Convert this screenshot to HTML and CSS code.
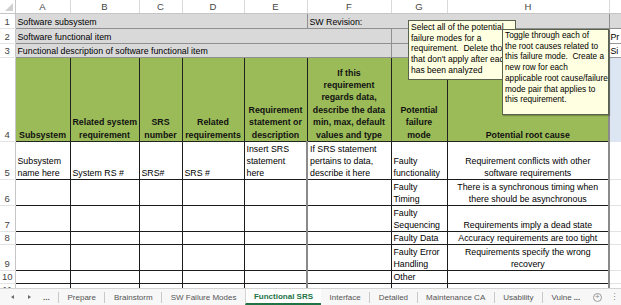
FILE: index.html
```html
<!DOCTYPE html>
<html lang="en">
<head>
    <meta charset="UTF-8">
    <title>Functional SRS</title>
    <link rel="stylesheet" href="styles.css">
</head>
<body>

	<div class="sheet">
		<table class="grid">
			<colgroup>
				<col class="w_rh"><col class="w_a"><col class="w_b"><col class="w_c"><col class="w_d">
				<col class="w_e"><col class="w_f"><col class="w_g"><col class="w_h"><col class="w_i">
			</colgroup>
			<tr class="r_ch">
				<th class="corner"></th>
				<th class="colhead">A</th>
				<th class="colhead">B</th>
				<th class="colhead">C</th>
				<th class="colhead">D</th>
				<th class="colhead">E</th>
				<th class="colhead">F</th>
				<th class="colhead">G</th>
				<th class="colhead">H</th>
				<th class="colhead"></th>
			</tr>
			<tr class="r_1">
				<td class="rh">1</td>
				<td class="band" colspan="5">Software subsystem</td>
				<td class="band rev" colspan="3">SW Revision:</td>
				<td class="band"></td>
			</tr>
			<tr class="r_2">
				<td class="rh">2</td>
				<td class="band" colspan="6">Software functional item</td>
				<td class="band" colspan="2"></td>
				<td class="side">Pr</td>
			</tr>
			<tr class="r_3">
				<td class="rh">3</td>
				<td class="band" colspan="6">Functional description of software functional item</td>
				<td class="band" colspan="2"></td>
				<td class="side">Si</td>
			</tr>
			<tr class="r_4">
				<td class="rh">4</td>
				<td class="head">Subsystem</td>
				<td class="head">Related system<br>requirement</td>
				<td class="head">SRS<br>number</td>
				<td class="head">Related<br>requirements</td>
				<td class="head">Requirement<br>statement or<br>description</td>
				<td class="head">If this<br>requirement<br>regards data,<br>describe the data<br>min, max, default<br>values and type</td>
				<td class="head">Potential<br>failure<br>mode</td>
				<td class="head">Potential root cause</td>
				<td class="blue"></td>
			</tr>
			<tr class="r_5">
				<td class="rh">5</td>
				<td class="d">Subsystem<br>name here</td>
				<td class="d">System RS #</td>
				<td class="d">SRS#</td>
				<td class="d">SRS #</td>
				<td class="d">Insert SRS<br>statement<br>here</td>
				<td class="d f">If SRS statement<br>pertains to data,<br>describe it here</td>
				<td class="d">Faulty<br>functionality</td>
				<td class="d h">Requirement conflicts with other<br>software requirements</td>
				<td class="out"></td>
			</tr>
			<tr class="r_6">
				<td class="rh">6</td>
				<td class="d"></td><td class="d"></td><td class="d"></td><td class="d"></td><td class="d"></td>
				<td class="d f"></td>
				<td class="d">Faulty<br>Timing</td>
				<td class="d h">There is a synchronous timing when<br>there should be asynchronous</td>
				<td class="out"></td>
			</tr>
			<tr class="r_7">
				<td class="rh">7</td>
				<td class="d"></td><td class="d"></td><td class="d"></td><td class="d"></td><td class="d"></td>
				<td class="d f"></td>
				<td class="d">Faulty<br>Sequencing</td>
				<td class="d h">Requirements imply a dead state</td>
				<td class="out"></td>
			</tr>
			<tr class="r_8">
				<td class="rh">8</td>
				<td class="d"></td><td class="d"></td><td class="d"></td><td class="d"></td><td class="d"></td>
				<td class="d f"></td>
				<td class="d">Faulty Data</td>
				<td class="d h">Accuracy requirements are too tight</td>
				<td class="out"></td>
			</tr>
			<tr class="r_9">
				<td class="rh">9</td>
				<td class="d"></td><td class="d"></td><td class="d"></td><td class="d"></td><td class="d"></td>
				<td class="d f"></td>
				<td class="d">Faulty Error<br>Handling</td>
				<td class="d h">Requirements specify the wrong<br>recovery</td>
				<td class="out"></td>
			</tr>
			<tr class="r_10">
				<td class="rh">10</td>
				<td class="d"></td><td class="d"></td><td class="d"></td><td class="d"></td><td class="d"></td>
				<td class="d f"></td>
				<td class="d">Other</td>
				<td class="d h"></td>
				<td class="out"></td>
			</tr>
			<tr class="r_11">
				<td class="rh">11</td>
				<td class="d"></td><td class="d"></td><td class="d"></td><td class="d"></td><td class="d"></td>
				<td class="d f"></td>
				<td class="d"></td>
				<td class="d h"></td>
				<td class="out"></td>
			</tr>
		</table>

		<div class="note note_modes">Select all of the potential<br>failure modes for a<br>requirement.&nbsp; Delete those<br>that don't apply after each<br>has been analyzed</div>
		<div class="note note_causes">Toggle through each of<br>the root causes related to<br>this failure mode.&nbsp; Create a<br>new row for each<br>applicable root cause/failure<br>mode pair that applies to<br>this requirement.</div>
	</div>

	<div class="tabbar">
		<div class="nav">
			<span class="arrow left"></span>
			<span class="arrow right"></span>
			<span class="dots">...</span>
		</div>
		<span class="tab">Prepare</span>
		<span class="tab">Brainstorm</span>
		<span class="tab">SW Failure Modes</span>
		<span class="tab active">Functional SRS</span>
		<span class="tab first">Interface</span>
		<span class="tab">Detailed</span>
		<span class="tab">Maintenance CA</span>
		<span class="tab">Usability</span>
		<span class="tab">Vulne <b class="more">...</b></span>
		<span class="add">+</span>
		<span class="menu">&#8942;</span>
	</div>

</body>
</html>
```

FILE: styles.css
```css
	*{
		margin: 0;
		padding: 0;
		box-sizing: border-box;
	}
    body {
        font-family: "Liberation Sans", Arial, sans-serif;
        width: 621px;
        height: 305px;
        overflow: hidden;
        background-color: #fff;
        color: #000;
    }
    .sheet {
    	position: relative;
    	height: 288px;
    	overflow: hidden;
    }
    .grid {
    	border-collapse: collapse;
    	table-layout: fixed;
    	width: 621px;
    }
    .w_rh { width: 15px; }
    .w_a { width: 55px; }
    .w_b { width: 69px; }
    .w_c { width: 43px; }
    .w_d { width: 62px; }
    .w_e { width: 63px; }
    .w_f { width: 84px; }
    .w_g { width: 56px; }
    .w_h { width: 162px; }
    .w_i { width: 12px; }

    .grid td,
    .grid th {
    	padding: 0 2px;
    	font-size: 8.8px;
    	line-height: 12px;
    	font-weight: normal;
    	text-align: left;
    	vertical-align: bottom;
    	white-space: nowrap;
    	overflow: hidden;
    }

    .r_ch { height: 13px; }
    .r_1 { height: 15px; }
    .r_2 { height: 15px; }
    .r_3 { height: 14px; }
    .r_4 { height: 84px; }
    .r_5 { height: 38px; }
    .r_6 { height: 26px; }
    .r_7 { height: 26px; }
    .r_8 { height: 12px; }
    .r_9 { height: 26px; }
    .r_10 { height: 13px; }
    .r_11 { height: 13px; }

    .grid .corner {
    	position: relative;
    	border-right: 1px solid #c6c6c6;
    	border-bottom: 1px solid #c6c6c6;
    }
    .corner::after {
    	content: "";
    	position: absolute;
    	right: 2px;
    	bottom: 2px;
    	border-left: 8px solid transparent;
    	border-bottom: 8px solid #d0d0d0;
    }
    .grid .colhead {
    	text-align: center;
    	vertical-align: middle;
    	font-size: 9.5px;
    	line-height: 13px;
    	color: #444;
    	border-right: 1px solid #d9d9d9;
    	border-bottom: 1px solid #c6c6c6;
    }
    .grid .rh {
    	padding: 0;
    	text-align: center;
    	font-size: 9.5px;
    	color: #444;
    	border-right: 1px solid #c6c6c6;
    	border-bottom: 1px solid #e3e3e3;
    }
    .grid .band {
    	background-color: #d9d9d9;
    	border: 1px solid #8f8f8f;
    }
    .grid .side {
    	padding: 0 1px;
    	border: 1px solid #9a9a9a;
    	background-color: #fff;
    }
    .grid .head {
    	background-color: #9bbb59;
    	border: 1px solid #222;
    	font-weight: bold;
    	text-align: center;
    	line-height: 12.4px;
    	color: #111;
    }
    .grid .blue {
    	background-color: #dce6f2;
    	border-left: 2px solid #8a8a8a;
    }
    .grid .d {
    	border: 1px solid #1c1c1c;
    }
    .grid .f {
    	border-left: 2px solid #8a8a8a;
    }
    .grid .h {
    	text-align: center;
    	border-right: 2px solid #8a8a8a;
    }
    .grid .out {
    	border-bottom: 1px solid #e3e3e3;
    }

    .note {
    	position: absolute;
    	background-color: #ffffe1;
    	border: 1px solid #59624d;
    	padding: 1px 1px 1px 2px;
    	font-size: 8.25px;
    	line-height: 10.7px;
    	white-space: nowrap;
    	overflow: hidden;
    }
    .note_modes {
    	left: 408px;
    	top: 20px;
    	width: 108px;
    	height: 60px;
    	font-size: 8.5px;
    }
    .note_causes {
    	left: 502px;
    	top: 29px;
    	width: 107px;
    	height: 86px;
    	box-shadow: 1px 1px 1px rgba(0, 0, 0, 0.25);
    }

    .tabbar {
    	display: flex;
    	align-items: center;
    	height: 17px;
    	background-color: #f7f7f7;
    	border-top: 1px solid #d4d4d4;
    	font-size: 8px;
    	color: #555;
    }
    .nav {
    	display: flex;
    	align-items: center;
    	width: 58px;
    	height: 100%;
    }
    .arrow {
    	width: 0;
    	height: 0;
    	border-top: 2.5px solid transparent;
    	border-bottom: 2.5px solid transparent;
    }
    .arrow.left {
    	margin-left: 11px;
    	border-right: 3px solid #6a6a6a;
    }
    .arrow.right {
    	margin-left: 14px;
    	border-left: 3px solid #6a6a6a;
    }
    .dots {
    	margin-left: 12px;
    	font-weight: bold;
    	color: #555;
    }
    .tab {
    	display: flex;
    	align-items: center;
    	height: 11px;
    	padding: 0 8.5px;
    	border-left: 1px solid #c8c8c8;
    	white-space: nowrap;
    }
    .tab.active {
    	height: 16px;
    	background-color: #fff;
    	border-left: 1px solid #d4d4d4;
    	border-bottom: 2px solid #217346;
    	color: #217346;
    	font-weight: bold;
    	padding: 0 8px;
    }
    .tab.first {
    	border-left: none;
    }
    .more {
    	margin-left: 2px;
    	color: #555;
    }
    .add {
    	display: flex;
    	align-items: center;
    	justify-content: center;
    	width: 9px;
    	height: 9px;
    	margin-left: 4px;
    	border: 1px solid #9a9a9a;
    	border-radius: 50%;
    	font-size: 8px;
    	line-height: 8px;
    	color: #8a8a8a;
    }
    .menu {
    	margin-left: 8px;
    	font-size: 9px;
    	color: #8a8a8a;
    }
```
